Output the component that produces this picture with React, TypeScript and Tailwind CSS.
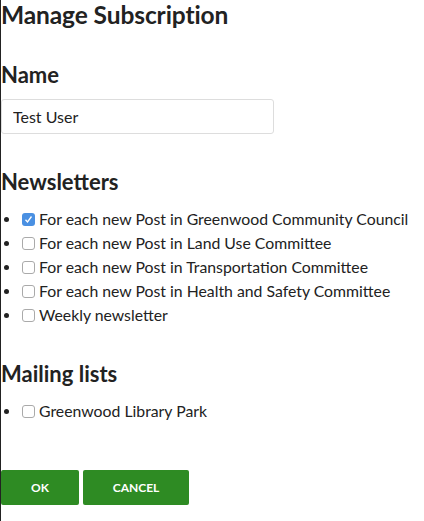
export default function App() {
  const newsletters = [
    { label: 'For each new Post in Greenwood Community Council', checked: true },
    { label: 'For each new Post in Land Use Committee', checked: false },
    { label: 'For each new Post in Transportation Committee', checked: false },
    { label: 'For each new Post in Health and Safety Committee', checked: false },
    { label: 'Weekly newsletter', checked: false },
  ]

  return (
    <div className="min-h-screen w-full border-l border-[#222] bg-white font-['Lato',sans-serif] text-[#222]">
      <h1 className="text-[24.5px] font-bold leading-[30px] tracking-[-0.1px]">Manage Subscription</h1>

      <h2 className="mt-[30px] text-[22px] font-bold leading-[30px]">Name</h2>
      <input
        className="mt-[9px] h-[35px] w-[273px] rounded-[3px] border border-[#ddd] px-[11px] text-[16px] text-[#222] outline-none"
        defaultValue="Test User"
      />

      <h2 className="mt-[33px] text-[22px] font-bold leading-[30px]">Newsletters</h2>
      <ul className="mt-[10px]">
        {newsletters.map((n) => (
          <Item key={n.label} label={n.label} checked={n.checked} />
        ))}
      </ul>

      <h2 className="mt-[32px] text-[22px] font-bold leading-[30px]">Mailing lists</h2>
      <ul className="mt-[10px]">
        <Item label="Greenwood Library Park" checked={false} />
      </ul>

      <div className="mt-[47px] flex gap-[4px]">
        <button className="h-[35px] w-[78px] rounded-[2px] bg-[#2e8b23] text-[12px] font-bold text-white">
          OK
        </button>
        <button className="h-[35px] w-[106px] rounded-[2px] bg-[#2e8b23] text-[12px] font-bold text-white">
          CANCEL
        </button>
      </div>
    </div>
  )
}

function Item({ label, checked }: { label: string; checked: boolean }) {
  return (
    <li className="flex h-[24px] items-center text-[15.8px]">
      <span className="ml-[3px] h-[5px] w-[5px] rounded-full bg-[#222]" />
      {checked ? (
        <span className="ml-[13px] flex h-[13px] w-[13px] items-center justify-center rounded-[3px] bg-[#4a90e2]">
          <svg width="9" height="9" viewBox="0 0 9 9" fill="none">
            <path d="M1.5 4.8 L3.5 7 L7.5 1.5" stroke="white" strokeWidth="1.3" />
          </svg>
        </span>
      ) : (
        <span className="ml-[13px] h-[13px] w-[13px] rounded-[3px] border border-[#aaa] bg-white" />
      )}
      <span className="ml-[4px]">{label}</span>
    </li>
  )
}
